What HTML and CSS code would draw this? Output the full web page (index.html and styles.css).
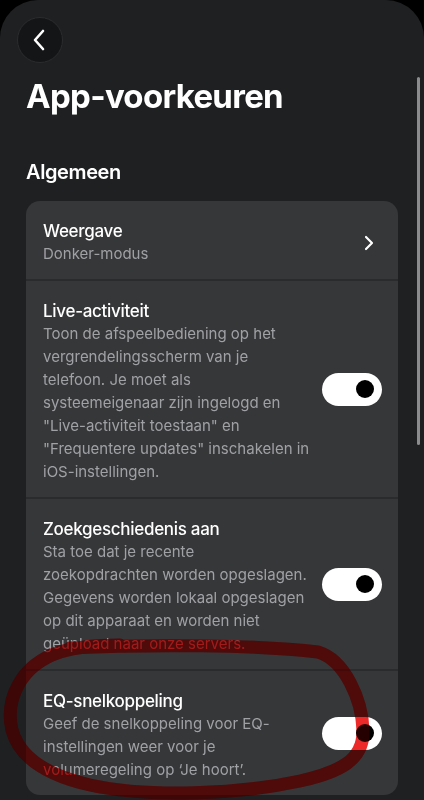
FILE: index.html
```html
<!DOCTYPE html>
<html lang="nl">
<head>
    <meta charset="UTF-8">
    <title>App-voorkeuren</title>
    <meta name="viewport" content="width=device-width, initial-scale=1.0">
    <link rel="stylesheet" href="styles.css">
</head>
<body>
    <div class="screen">
        <header class="top">
            <a class="back" href="#">
                <svg width="14" height="22" viewBox="0 0 14 22"><path d="M11 2 L3 11 L11 20" fill="none" stroke="#fff" stroke-width="2.6" stroke-linecap="round" stroke-linejoin="round"/></svg>
            </a>
            <h1>App-voorkeuren</h1>
        </header>

        <h2 class="section-title">Algemeen</h2>

        <div class="card">
            <div class="row row-link">
                <div class="text">
                    <div class="label">Weergave</div>
                    <div class="desc">Donker-modus</div>
                </div>
                <svg class="chevron" width="10" height="16" viewBox="0 0 10 16"><path d="M2 2 L8 8 L2 14" fill="none" stroke="#fff" stroke-width="2.2" stroke-linecap="round" stroke-linejoin="round"/></svg>
            </div>
            <div class="row">
                <div class="text">
                    <div class="label">Live-activiteit</div>
                    <div class="desc">Toon de afspeelbediening op het vergrendelingsscherm van je telefoon. Je moet als systeemeigenaar zijn ingelogd en "Live-activiteit toestaan" en "Frequentere updates" inschakelen in iOS-instellingen.</div>
                </div>
                <span class="toggle"><span class="knob"></span></span>
            </div>
            <div class="row">
                <div class="text">
                    <div class="label">Zoekgeschiedenis aan</div>
                    <div class="desc">Sta toe dat je recente zoekopdrachten worden opgeslagen. Gegevens worden lokaal opgeslagen op dit apparaat en worden niet geüpload naar onze servers.</div>
                </div>
                <span class="toggle"><span class="knob"></span></span>
            </div>
            <div class="row">
                <div class="text">
                    <div class="label">EQ-snelkoppeling</div>
                    <div class="desc">Geef de snelkoppeling voor EQ-instellingen weer voor je volumeregeling op ‘Je hoort’.</div>
                </div>
                <span class="toggle"><span class="knob"></span></span>
            </div>
        </div>

        <div class="scrollbar"></div>
    </div>

    <!-- rode markering uit de schermafbeelding -->
    <svg class="mark mark-tint" viewBox="0 0 424 800">
        <path d="M70 648 C150 644 260 645 318 652 C345 660 362 700 363 730 C364 760 340 772 300 781 C240 794 150 798 90 785 C50 776 20 760 12 730 C5 700 20 665 60 652 C80 646 100 645 120 645"/>
    </svg>
    <svg class="mark mark-multiply" viewBox="0 0 424 800">
        <path d="M70 648 C150 644 260 645 318 652 C345 660 362 700 363 730 C364 760 340 772 300 781 C240 794 150 798 90 785 C50 776 20 760 12 730 C5 700 20 665 60 652 C80 646 100 645 120 645"/>
    </svg>
</body>
</html>
```

FILE: styles.css
```css
*{ margin: 0; padding: 0; box-sizing: border-box; }
html,body{
    height: 100%;
    overflow: hidden;
}
body{
    background: #000;
    font-family: Inter, "Liberation Sans", sans-serif;
    color: #fff;
    position: relative;
}
.screen{
    position: relative;
    height: 800px;
    background: #1f2022;
    border-radius: 38px 38px 0 0;
    padding: 17px 26px 0;
}
.top .back{
    display: flex;
    align-items: center;
    justify-content: center;
    width: 46px;
    height: 46px;
    margin-left: -9px;
    border-radius: 50%;
    background: #141516;
    border: 1px solid #2b2c2e;
}
.top .back svg{
    margin-left: -2px;
}
.top h1{
    margin-top: 13px;
    font-size: 33px;
    line-height: 40px;
    font-weight: 700;
    letter-spacing: -0.7px;
}
.section-title{
    margin-top: 44px;
    font-size: 20px;
    line-height: 24px;
    font-weight: 600;
    letter-spacing: -0.4px;
}
.card{
    margin-top: 17px;
    background: #363739;
    border-radius: 14px;
    overflow: hidden;
}
.row{
    display: flex;
    align-items: center;
    padding: 20px 16px 14px 17px;
    border-top: 2px solid #2a2b2d;
}
.row:first-child{
    border-top: none;
}
.row .text{
    flex: 1;
    min-width: 0;
    padding-right: 12px;
}
.row .label{
    font-size: 17px;
    line-height: 21px;
    font-weight: 500;
    letter-spacing: -0.3px;
}
.row .desc{
    font-size: 15px;
    line-height: 23px;
    color: #a0a1a5;
}
.row-link{
    padding-right: 24px;
}
.chevron{
    flex: none;
}
.toggle{
    flex: none;
    display: flex;
    align-items: center;
    justify-content: flex-end;
    width: 60px;
    height: 33px;
    margin-top: -6px;
    padding-right: 8px;
    border-radius: 17px;
    background: #fff;
}
.toggle .knob{
    width: 18px;
    height: 18px;
    border-radius: 50%;
    background: #000;
}
.scrollbar{
    position: absolute;
    right: 4px;
    top: 77px;
    width: 3px;
    height: 368px;
    border-radius: 2px;
    background: #8c8c8e;
}
.mark{
    position: absolute;
    left: 0;
    top: 0;
    width: 424px;
    height: 800px;
    pointer-events: none;
}
.mark path{
    fill: none;
    stroke-width: 13;
    stroke-linecap: round;
    stroke-linejoin: round;
}
.mark-tint path{
    stroke: rgba(170, 20, 20, 0.22);
}
.mark-multiply{
    mix-blend-mode: multiply;
}
.mark-multiply path{
    stroke: #ff3434;
}
```
